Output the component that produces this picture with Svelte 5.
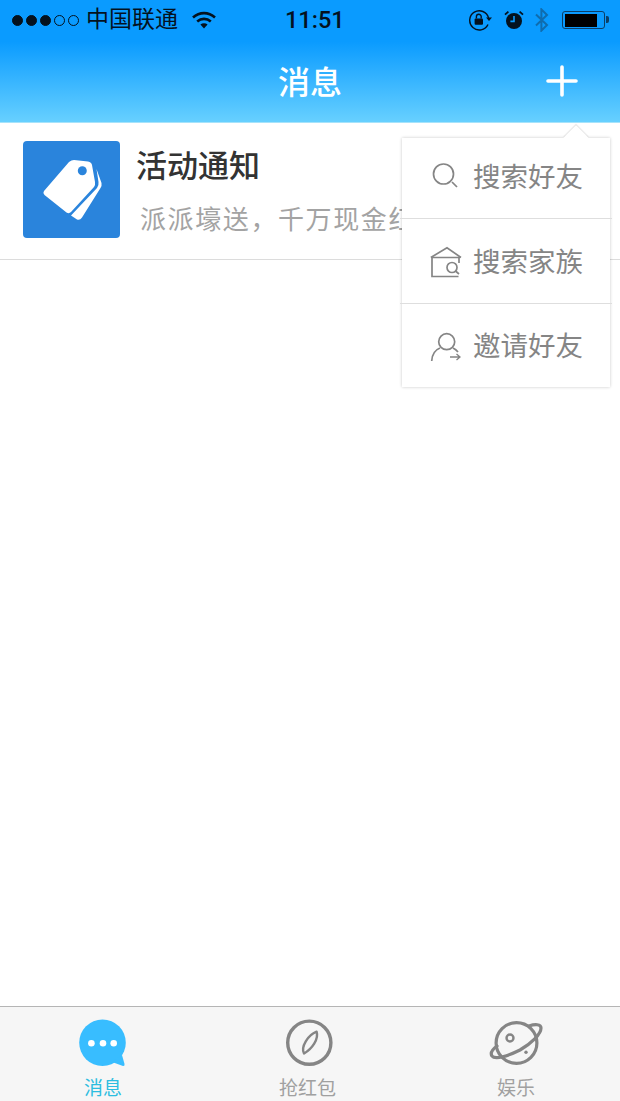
<script lang="ts">
	interface MenuItem {
		label: string;
		icon: 'search' | 'family' | 'invite';
	}

	interface Tab {
		label: string;
		icon: 'chat' | 'compass' | 'planet';
		active?: boolean;
	}

	const menuItems: MenuItem[] = [
		{ label: '搜索好友', icon: 'search' },
		{ label: '搜索家族', icon: 'family' },
		{ label: '邀请好友', icon: 'invite' }
	];

	const tabs: Tab[] = [
		{ label: '消息', icon: 'chat', active: true },
		{ label: '抢红包', icon: 'compass' },
		{ label: '娱乐', icon: 'planet' }
	];
</script>

<div class="phone">
	<header class="top">
		<div class="status">
			<div class="status-left">
				<span class="dots">
					{#each [1, 2, 3, 4, 5] as n}
						<i class:on={n <= 3}></i>
					{/each}
				</span>
				<span class="carrier">中国联通</span>
				<svg class="wifi" width="24" height="18" viewBox="0 0 24 18">
					<path d="M1 6.500C7.500.6 16.500.6 23 6.500" fill="none" stroke="#04121f" stroke-width="2.600" />
					<path d="M5.200 10.400c4-3.400 9.600-3.400 13.600 0" fill="none" stroke="#04121f" stroke-width="2.600" />
					<path d="M8.400 13.400c2.200-1.600 5-1.600 7.200 0L12 17.500z" fill="#04121f" />
				</svg>
			</div>
			<span class="time">11:51</span>
			<div class="status-right">
				<svg class="lock" width="24" height="22" viewBox="0 0 24 22">
					<path d="M20 15.500A9.600 9.600 0 1 1 20.600 9" fill="none" stroke="#04121f" stroke-width="1.400" />
					<path d="M18 8.500h6l-3 3.400z" fill="#04121f" />
					<rect x="6.600" y="9.400" width="8.400" height="6.400" rx="1" fill="#04121f" />
					<path d="M8.400 9.400V7.600a2.400 2.400 0 0 1 4.800 0v1.800" fill="none" stroke="#04121f" stroke-width="1.400" />
				</svg>
				<svg class="alarm" width="20" height="20" viewBox="0 0 20 20">
					<circle cx="10" cy="11" r="8" fill="#04121f" />
					<path d="M10 6v5.400H6.400" fill="none" stroke="#0a9bff" stroke-width="1.600" />
					<path d="M1 4.600 4.400 1.600M19 4.600 15.600 1.600" stroke="#04121f" stroke-width="1.800" />
				</svg>
				<svg class="bt" width="16" height="24" viewBox="0 0 16 24">
					<path d="M2 6.500 13 17l-5.600 5.600V1.400L13 7 2 17.500" fill="none" stroke="#0f6cae" stroke-width="2" />
				</svg>
				<div class="battery"><b></b></div>
			</div>
		</div>
		<div class="nav">
			<h1>消息</h1>
			<svg class="plus" width="32" height="32" viewBox="0 0 32 32">
				<path d="M16 2v28M2 16h28" stroke="#fff" stroke-width="3.600" stroke-linecap="round" />
			</svg>
		</div>
	</header>

	<main class="content">
		<div class="row">
			<div class="thumb">
				<svg width="97" height="97" viewBox="0 0 97 97">
					<path d="M46 21Q48.500 19 51 19L65 20.500Q68.500 21 69 24L72 41Q72.500 44 71 46L48 71Q46 73 43.500 71.500L21.500 54Q19.500 52 21 50Z" fill="#fff" />
					<path d="M73.500 28L78.500 42Q79 45 77.500 47L59 76.500Q57 79.500 54 78.500L48 74.500L74 47Q76 44.500 75.500 41Z" fill="#fff" />
					<circle cx="59.300" cy="29.700" r="4.500" fill="#2a84dc" />
				</svg>
			</div>
			<div class="row-text">
				<div class="row-title">活动通知</div>
				<div class="row-sub">派派壕送，千万现金红包等你来抢</div>
			</div>
		</div>

		<div class="menu">
			<span class="arrow"></span>
			{#each menuItems as item}
				<div class="menu-item">
					<svg width="32" height="32" viewBox="0 0 32 32" fill="none" stroke="#858585" stroke-width="1.700">
						{#if item.icon === 'search'}
							<circle cx="13.500" cy="14" r="10" />
							<path d="M22 22l5 5" />
						{:else if item.icon === 'family'}
							<path d="M.8 11.500 17 1.800 31 11.500" />
							<path d="M2 11.500h28M2 11v19.500h26.500M29 11v6" />
							<circle cx="22" cy="21.500" r="5" />
							<path d="M25.500 25l3.500 3" />
						{:else}
							<circle cx="16.700" cy="11.700" r="8" />
							<path d="M1.700 31C2 25 5 20 10 18M23 18Q26 19.500 28 22" />
							<path d="M20 27h10M26.500 24 30 27l-3.500 3" stroke-width="1.300" />
						{/if}
					</svg>
					<span>{item.label}</span>
				</div>
			{/each}
		</div>
	</main>

	<nav class="tabs">
		{#each tabs as tab}
			<div class="tab" class:active={tab.active}>
				{#if tab.icon === 'chat'}
					<svg width="50" height="50" viewBox="0 0 50 50">
						<circle cx="24.500" cy="23.700" r="23.300" fill="#38bdff" />
						<path d="M34 43L44 36L46.500 45Q47 47.200 45 47Z" fill="#38bdff" />
						<circle cx="13.400" cy="24.300" r="3.300" fill="#fff" />
						<circle cx="25" cy="24.300" r="3.300" fill="#fff" />
						<circle cx="35.700" cy="24.300" r="3.300" fill="#fff" />
					</svg>
				{:else if tab.icon === 'compass'}
					<svg width="50" height="50" viewBox="0 0 50 50" fill="none" stroke="#858585">
						<circle cx="25.300" cy="23.700" r="21.600" stroke-width="3.400" />
						<path d="M32.600 12.700C35 20 28 30 20 34.500C16.500 28 24 16 32.600 12.700Z" stroke-width="2.400" stroke-linejoin="round" />
					</svg>
				{:else}
					<svg width="56" height="50" viewBox="0 0 56 50" fill="none" stroke="#858585" stroke-width="3.200">
						<circle cx="28.500" cy="24" r="20.400" />
						<path d="M41 7C47 5 53 5 53 9C53 15 44 24 32 31C20 37 7 41 4 37C2 34 5 30 9 27" stroke-linecap="round" />
						<circle cx="22" cy="19" r="3.500" stroke-width="2.400" />
						<circle cx="38" cy="33.300" r="1.700" fill="#858585" stroke="none" />
					</svg>
				{/if}
				<span>{tab.label}</span>
			</div>
		{/each}
	</nav>
</div>

<style>
	:global(body) {
		font-family: 'Liberation Sans', 'Noto Sans CJK SC', sans-serif;
		background: #fff;
	}

	.phone {
		width: 620px;
		height: 1101px;
		display: flex;
		flex-direction: column;
		overflow: hidden;
	}

	.top {
		height: 123px;
		box-sizing: border-box;
		border-bottom: 1px solid #a6e3fb;
		background: linear-gradient(180deg, #0a9bff 0%, #0a9bff 34%, #67d0ff 100%);
	}

	.status {
		height: 40px;
		display: flex;
		align-items: center;
		justify-content: space-between;
		padding: 0 15px 0 12px;
		color: #04121f;
		position: relative;
	}

	.status-left,
	.status-right {
		display: flex;
		align-items: center;
	}

	.dots {
		display: flex;
		gap: 3px;
		margin-right: 7px;
	}

	.dots i {
		width: 11px;
		height: 11px;
		border-radius: 50%;
		box-sizing: border-box;
		border: 1px solid #04121f;
	}

	.dots i.on {
		background: #04121f;
	}

	.carrier {
		font-size: 23px;
		line-height: 30px;
		margin-bottom: 2px;
	}

	.wifi {
		margin-left: 14px;
	}

	.time {
		position: absolute;
		left: 285px;
		font-family: Roboto, 'Liberation Sans', sans-serif;
		font-size: 23.500px;
		font-weight: 500;
	}

	.lock,
	.bt {
		margin-right: 12px;
	}

	.alarm {
		margin-right: 10px;
	}

	.battery {
		width: 43px;
		height: 18px;
		box-sizing: border-box;
		border: 1.500px solid #0c3f66;
		border-radius: 3px;
		padding: 1.500px;
		position: relative;
	}

	.battery b {
		display: block;
		width: 32px;
		height: 100%;
		background: #000;
	}

	.battery::after {
		content: '';
		position: absolute;
		right: -5px;
		top: 4px;
		width: 3px;
		height: 7px;
		background: #0c3f66;
		border-radius: 0 2px 2px 0;
	}

	.nav {
		height: 82px;
		position: relative;
		display: flex;
		align-items: center;
		justify-content: center;
	}

	h1 {
		margin: 0;
		font-size: 32px;
		font-weight: 500;
		color: #fff;
		position: relative;
		top: -1px;
	}

	.plus {
		position: absolute;
		left: 546px;
		top: 25px;
	}

	.content {
		flex: 1;
		position: relative;
	}

	.row {
		height: 137px;
		box-sizing: border-box;
		border-bottom: 1px solid #dcdcdc;
		display: flex;
		align-items: center;
		padding: 0 0 3px 23px;
		gap: 16px;
	}

	.thumb {
		width: 97px;
		height: 97px;
		background: #2a84dc;
		border-radius: 4px;
		flex: none;
	}

	.thumb svg {
		display: block;
	}

	.row-text {
		min-width: 0;
		white-space: nowrap;
		padding-top: 4px;
	}

	.row-title {
		font-size: 31px;
		font-weight: 500;
		color: #333;
		line-height: 44px;
	}

	.row-sub {
		font-size: 26px;
		letter-spacing: 1.600px;
		color: #a3a3a3;
		line-height: 36px;
		margin: 13px 0 0 4px;
	}

	.menu {
		position: absolute;
		left: 402px;
		top: 15px;
		width: 208px;
		background: #fff;
		box-shadow: 0 0 3px rgba(0, 0, 0, 0.22);
	}

	.arrow {
		position: absolute;
		right: 25px;
		top: -9px;
		width: 18px;
		height: 18px;
		background: #fff;
		transform: rotate(45deg);
		box-shadow: -1px -1px 1px rgba(0, 0, 0, 0.1);
	}

	.menu-item {
		height: 85px;
		box-sizing: border-box;
		display: flex;
		align-items: center;
		padding-left: 28px;
		gap: 11px;
		position: relative;
		font-size: 27.500px;
		color: #858585;
	}

	.menu-item span {
		margin-bottom: 3px;
	}

	.menu-item:not(:last-child)::after {
		content: '';
		position: absolute;
		left: -2px;
		right: -2px;
		bottom: 0;
		height: 1px;
		background: #dedede;
	}

	.menu-item:first-of-type {
		height: 81px;
		padding-bottom: 5px;
	}

	.menu-item:last-child {
		height: 83px;
	}

	.tabs {
		height: 95px;
		box-sizing: border-box;
		border-top: 1px solid #b5b5b5;
		background: #f6f6f6;
		display: grid;
		grid-template-columns: 206px 206px 208px;
	}

	.tab {
		display: flex;
		flex-direction: column;
		align-items: center;
		color: #a0a0a0;
		font-size: 19px;
		padding-top: 12px;
	}

	.tab svg {
		display: block;
		margin-bottom: 8px;
	}

	.tab span {
		line-height: 24px;
	}

	.tab:nth-child(2) span {
		margin-right: 3px;
	}

	.tab.active {
		color: #2cbde0;
	}
</style>
